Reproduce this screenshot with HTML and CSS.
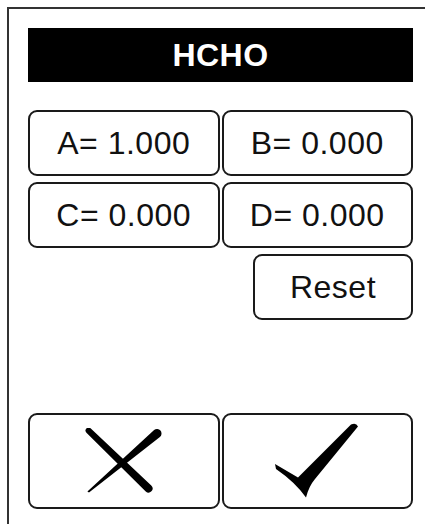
FILE: index.html
```html
<!DOCTYPE html>
<html lang="en">
<head>
  <meta charset="UTF-8" />
  <meta name="viewport" content="width=device-width, initial-scale=1.0" />
  <title>HCHO Calibration</title>
  <link rel="stylesheet" href="styles.css">
</head>
<body>
  <div class="frame">
    <div class="screen">
      <h2 class="title">HCHO</h2>

      <div class="coeffs">
        <button class="key">A= 1.000</button>
        <button class="key">B= 0.000</button>
        <button class="key">C= 0.000</button>
        <button class="key">D= 0.000</button>
      </div>

      <div class="reset-row">
        <button class="key reset">Reset</button>
      </div>

      <div class="actions">
        <button class="key action" aria-label="Cancel">
          <svg class="icon-x" width="78" height="66" viewBox="0 0 78 66">
            <path d="M5.57,0.33 L66.26,57.6 A4,4 0 0 1 60.74,63.4 L1.43,4.67 A3,3 0 0 1 5.57,0.33 Z"/>
            <path d="M69.1,2.05 A4.5,4.5 0 0 1 74.9,8.95 L4,64.6 L2.4,63.6 Z"/>
          </svg>
        </button>
        <button class="key action" aria-label="Confirm">
          <svg class="icon-check" width="86" height="77" viewBox="0 0 86 77">
            <path d="M1,42 L24,55.5 L77,2.6 Q82,0 84,4.5 L41,57 Q35,64 32,75.5 Q21,60 2,47 Z"/>
          </svg>
        </button>
      </div>
    </div>
  </div>
</body>
</html>
```

FILE: styles.css
```css
html, body {
  margin: 0;
  background: #ffffff;
  overflow: hidden;
}
body {
  width: 425px;
  height: 524px;
  font-family: 'Liberation Sans', Arial, sans-serif;
  color: #111;
}
.frame {
  margin: 7px 0 0 7px;
  width: 418px;
  height: 517px;
  border-top: 2px solid #333;
  border-left: 2px solid #333;
  padding: 19px 0 0 19px;
  box-sizing: border-box;
}
.screen {
  width: 385px;
}
.title {
  margin: 0;
  height: 54px;
  background: #000;
  color: #fff;
  font-size: 32px;
  font-weight: bold;
  letter-spacing: 0.5px;
  display: flex;
  align-items: center;
  justify-content: center;
}
.key {
  box-sizing: border-box;
  height: 66px;
  border: 2px solid #1a1a1a;
  border-radius: 9px;
  background: #fff;
  color: #111;
  font-family: 'Liberation Sans', Arial, sans-serif;
  font-size: 32px;
  letter-spacing: 0.5px;
  padding: 0;
  display: flex;
  align-items: center;
  justify-content: center;
}
.coeffs {
  margin-top: 28px;
  display: grid;
  grid-template-columns: 1fr 1fr;
  column-gap: 2px;
  row-gap: 6px;
}
.reset-row {
  margin-top: 6px;
  display: flex;
  justify-content: flex-end;
}
.reset {
  width: 160px;
}
.actions {
  margin-top: 93px;
  display: grid;
  grid-template-columns: 1fr 1fr;
  column-gap: 2px;
}
.action {
  height: 96px;
}
.action svg {
  display: block;
  fill: #000;
}
.icon-x {
  margin-top: -1px;
}
.icon-check {
  margin-top: -2px;
}
```
